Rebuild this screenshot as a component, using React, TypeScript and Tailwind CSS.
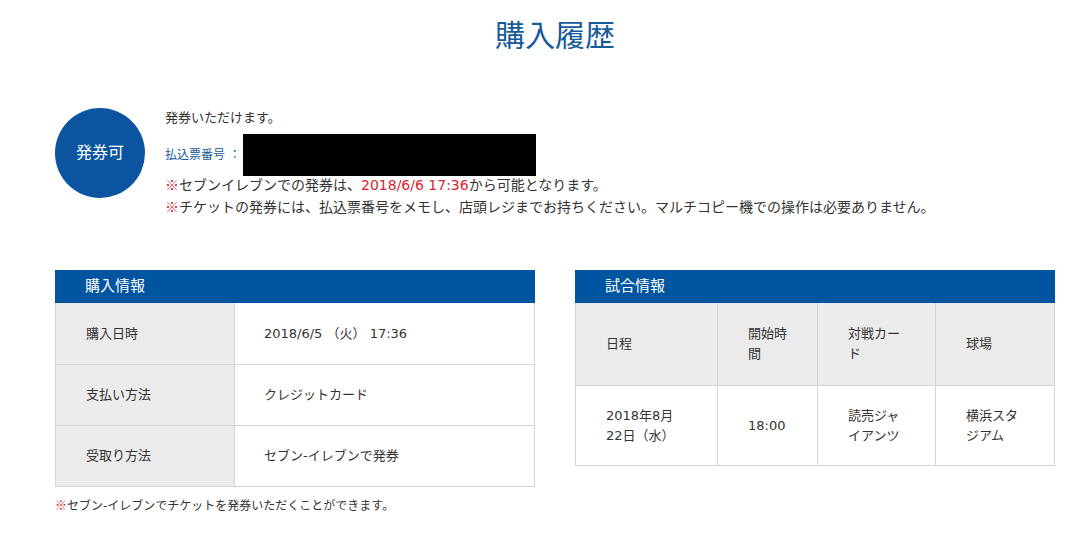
import React from 'react';

const font = { fontFamily: '"DejaVu Sans", "Noto Sans CJK JP", "Noto Sans", sans-serif' };

const purchaseRows = [
  { label: '購入日時', value: '2018/6/5 （火） 17:36' },
  { label: '支払い方法', value: 'クレジットカード' },
  { label: '受取り方法', value: 'セブン-イレブンで発券' },
];

// reference mark in the CJK face, red
const Mark: React.FC = () => (
  <span className="leading-none text-[#d7262f] font-['Noto_Sans_CJK_JP',sans-serif]">※</span>
);

const SectionHeader: React.FC<{ title: string }> = ({ title }) => (
  <div className="h-[33px] bg-[#0055a1] pl-[30px] flex items-center text-[15px] text-white">
    {title}
  </div>
);

const App: React.FC = () => {
  return (
    <div className="min-h-[557px] bg-white text-[#333333]" style={font}>
      <div className="ml-[55px] w-[1000px]">
        <h1 className="pt-[14px] text-center text-[30px] leading-[44px] text-[#175a9a]">購入履歴</h1>

        {/* status */}
        <div className="mt-[50px] flex">
          <div className="w-[90px] h-[90px] rounded-full bg-[#0b55a0] flex items-center justify-center text-[16px] text-white">
            発券可
          </div>
          <div className="ml-[20px]">
            <p className="text-[13px] leading-[20px]">発券いただけます。</p>
            <div className="mt-[6px] flex items-center">
              <span className="text-[12px] text-[#175a9a]">払込票番号 ：</span>
              <div className="ml-[2px] w-[293px] h-[42px] bg-black" />
            </div>
            <p className="text-[14px] leading-[22px] mt-[-2px]">
              <Mark />セブンイレブンでの発券は、
              <span className="text-[#d7262f]">2018/6/6 17:36</span>から可能となります。
            </p>
            <p className="text-[14px] leading-[23px]">
              <Mark />チケットの発券には、払込票番号をメモし、店頭レジまでお持ちください。マルチコピー機での操作は必要ありません。
            </p>
          </div>
        </div>

        {/* tables */}
        <div className="mt-[51px] flex justify-between items-start">
          <div className="w-[480px]">
            <SectionHeader title="購入情報" />
            <div className="border border-t-0 border-[#d4d4d4]">
              {purchaseRows.map((r, i) => (
                <div
                  key={r.label}
                  className={`flex h-[61px] text-[13px] ${i > 0 ? 'border-t border-[#d4d4d4]' : ''}`}
                >
                  <div className="w-[179px] bg-[#ebebeb] border-r border-[#d4d4d4] pl-[30px] flex items-center">
                    {r.label}
                  </div>
                  <div className="flex-1 pl-[29px] flex items-center">{r.value}</div>
                </div>
              ))}
            </div>
            <p className="mt-[10px] text-[12px] leading-[18px]">
              <Mark />セブン-イレブンでチケットを発券いただくことができます。
            </p>
          </div>

          <div className="w-[480px]">
            <SectionHeader title="試合情報" />
            <div className="border border-t-0 border-[#d4d4d4] text-[13px] leading-[20px]">
              <div className="flex h-[82px] bg-[#ebebeb]">
                <div className="w-[142px] border-r border-[#d4d4d4] px-[30px] flex items-center">日程</div>
                <div className="w-[100px] border-r border-[#d4d4d4] px-[30px] flex items-center">開始時間</div>
                <div className="w-[118px] border-r border-[#d4d4d4] px-[30px] flex items-center">対戦カード</div>
                <div className="flex-1 px-[30px] flex items-center">球場</div>
              </div>
              <div className="flex h-[80px] border-t border-[#d4d4d4]">
                <div className="w-[142px] border-r border-[#d4d4d4] px-[30px] flex items-center">
                  2018年8月<br />22日（水）
                </div>
                <div className="w-[100px] border-r border-[#d4d4d4] px-[30px] flex items-center">18:00</div>
                <div className="w-[118px] border-r border-[#d4d4d4] px-[30px] flex items-center">読売ジャイアンツ</div>
                <div className="flex-1 px-[30px] flex items-center">横浜スタジアム</div>
              </div>
            </div>
          </div>
        </div>
      </div>
    </div>
  );
};

export default App;
